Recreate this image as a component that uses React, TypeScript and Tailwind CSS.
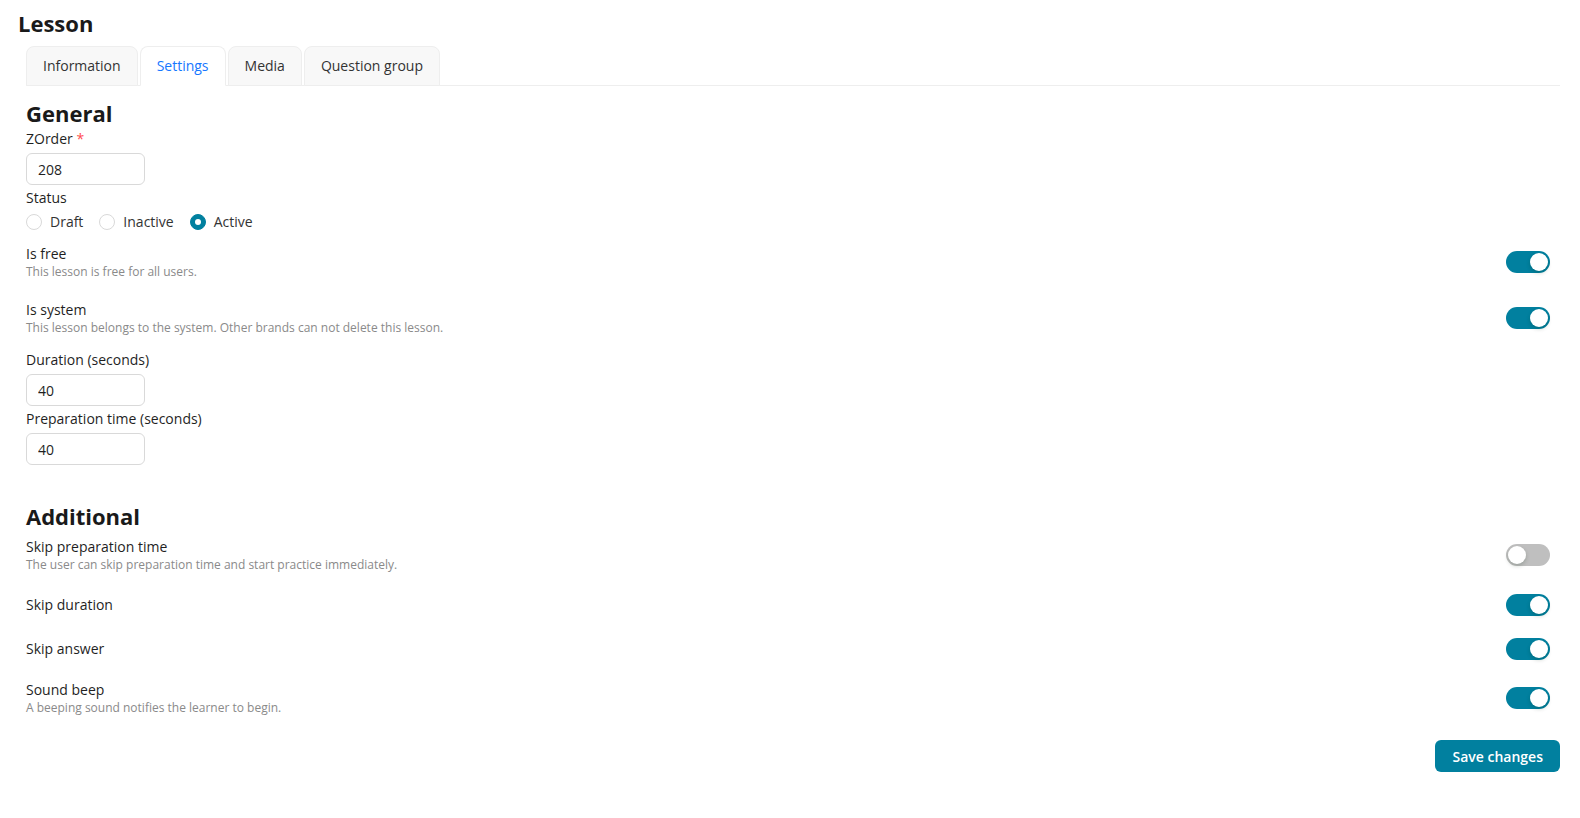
import { useState } from "react";

const TEAL = "bg-[#01809f]";

function Switch({ on, onChange }: { on: boolean; onChange: () => void }) {
  return (
    <button
      type="button"
      onClick={onChange}
      className={`relative h-[22px] w-[44px] shrink-0 rounded-full transition-colors ${on ? TEAL : "bg-[#bfbfbf]"}`}
    >
      <span
        className={`absolute top-[2px] h-[18px] w-[18px] rounded-full bg-white shadow-[0_2px_4px_rgba(0,35,11,0.2)] transition-all ${
          on ? "left-[24px]" : "left-[2px]"
        }`}
      />
    </button>
  );
}

interface ToggleRowProps {
  label: string;
  description?: string;
  on: boolean;
  onChange: () => void;
  className?: string;
}

function ToggleRow({ label, description, on, onChange, className = "" }: ToggleRowProps) {
  return (
    <div className={`flex items-center justify-between pr-[10px] ${className}`}>
      <div>
        <div className="text-[14px] leading-[20px] text-[#1f1f1f]">{label}</div>
        {description && <div className="text-[12px] leading-[16px] text-[#8a8a8a]">{description}</div>}
      </div>
      <Switch on={on} onChange={onChange} />
    </div>
  );
}

function TextInput({ value, className = "" }: { value: string; className?: string }) {
  return (
    <input
      defaultValue={value}
      className={`block h-[32px] w-[119px] rounded-[6px] border border-[#d9d9d9] bg-white px-[11px] text-[14px] text-[#1f1f1f] outline-none ${className}`}
    />
  );
}

const tabs = ["Information", "Settings", "Media", "Question group"];

export default function App() {
  const [tab, setTab] = useState("Settings");
  const [status, setStatus] = useState("Active");
  const [flags, setFlags] = useState({
    free: true,
    system: true,
    skipPrep: false,
    skipDuration: true,
    skipAnswer: true,
    beep: true,
  });
  const toggle = (k: keyof typeof flags) => setFlags((f) => ({ ...f, [k]: !f[k] }));

  return (
    <div className="bg-white pt-[8px] pb-6 font-['Open_Sans',sans-serif] text-[#1f1f1f]">
      <h1 className="pl-[18px] text-[22px] font-bold leading-[30px] text-[#1a1a1a]">Lesson</h1>

      <div className="ml-[26px] mr-[20px]">
        <div className="mt-[8px] flex gap-[2px] border-b border-[#eeeeee]">
          {tabs.map((t) => (
            <button
              key={t}
              onClick={() => setTab(t)}
              className={`-mb-px h-[40px] rounded-t-[8px] border border-[#eeeeee] px-[16px] pb-[2px] text-[14px] ${
                t === tab ? "border-b-white bg-white text-[#1677ff]" : "bg-[#f8f8f8] text-[#333333]"
              }`}
            >
              {t}
            </button>
          ))}
        </div>

        <h2 className="mt-[13px] text-[22px] font-bold leading-[28px] text-[#1a1a1a]">General</h2>
        <div className="mt-[2px] text-[14px] leading-[20px]">
          ZOrder <span className="text-[#ff4d4f]">*</span>
        </div>
        <TextInput value="208" className="mt-[4px]" />

        <div className="mt-[3px] text-[14px] leading-[20px]">Status</div>
        <div className="mt-[4px] flex items-center text-[14px] leading-[20px]">
          {["Draft", "Inactive", "Active"].map((s) => (
            <label key={s} className="mr-[16px] flex cursor-pointer items-center" onClick={() => setStatus(s)}>
              <span
                className={`flex h-[16px] w-[16px] items-center justify-center rounded-full border ${
                  status === s ? "border-[#01809f] bg-[#01809f]" : "border-[#d9d9d9] bg-white"
                }`}
              >
                {status === s && <span className="h-[6px] w-[6px] rounded-full bg-white" />}
              </span>
              <span className="ml-[8px] text-[#333333]">{s}</span>
            </label>
          ))}
        </div>

        <ToggleRow
          className="mt-[12px]"
          label="Is free"
          description="This lesson is free for all users."
          on={flags.free}
          onChange={() => toggle("free")}
        />
        <ToggleRow
          className="mt-[20px]"
          label="Is system"
          description="This lesson belongs to the system. Other brands can not delete this lesson."
          on={flags.system}
          onChange={() => toggle("system")}
        />

        <div className="mt-[14px] text-[14px] leading-[20px]">Duration (seconds)</div>
        <TextInput value="40" className="mt-[4px]" />
        <div className="mt-[3px] text-[14px] leading-[20px]">Preparation time (seconds)</div>
        <TextInput value="40" className="mt-[4px]" />

        <h2 className="mt-[37px] text-[22px] font-bold leading-[28px] text-[#1a1a1a]">Additional</h2>
        <ToggleRow
          className="mt-[7px]"
          label="Skip preparation time"
          description="The user can skip preparation time and start practice immediately."
          on={flags.skipPrep}
          onChange={() => toggle("skipPrep")}
        />
        <ToggleRow
          className="mt-[21px]"
          label="Skip duration"
          on={flags.skipDuration}
          onChange={() => toggle("skipDuration")}
        />
        <ToggleRow
          className="mt-[22px]"
          label="Skip answer"
          on={flags.skipAnswer}
          onChange={() => toggle("skipAnswer")}
        />
        <ToggleRow
          className="mt-[20px]"
          label="Sound beep"
          description="A beeping sound notifies the learner to begin."
          on={flags.beep}
          onChange={() => toggle("beep")}
        />

        <div className="mt-[24px] flex justify-end">
          <button className={`h-[32px] rounded-[6px] ${TEAL} px-[17px] text-[14px] font-semibold text-white`}>
            Save changes
          </button>
        </div>
      </div>
    </div>
  );
}
